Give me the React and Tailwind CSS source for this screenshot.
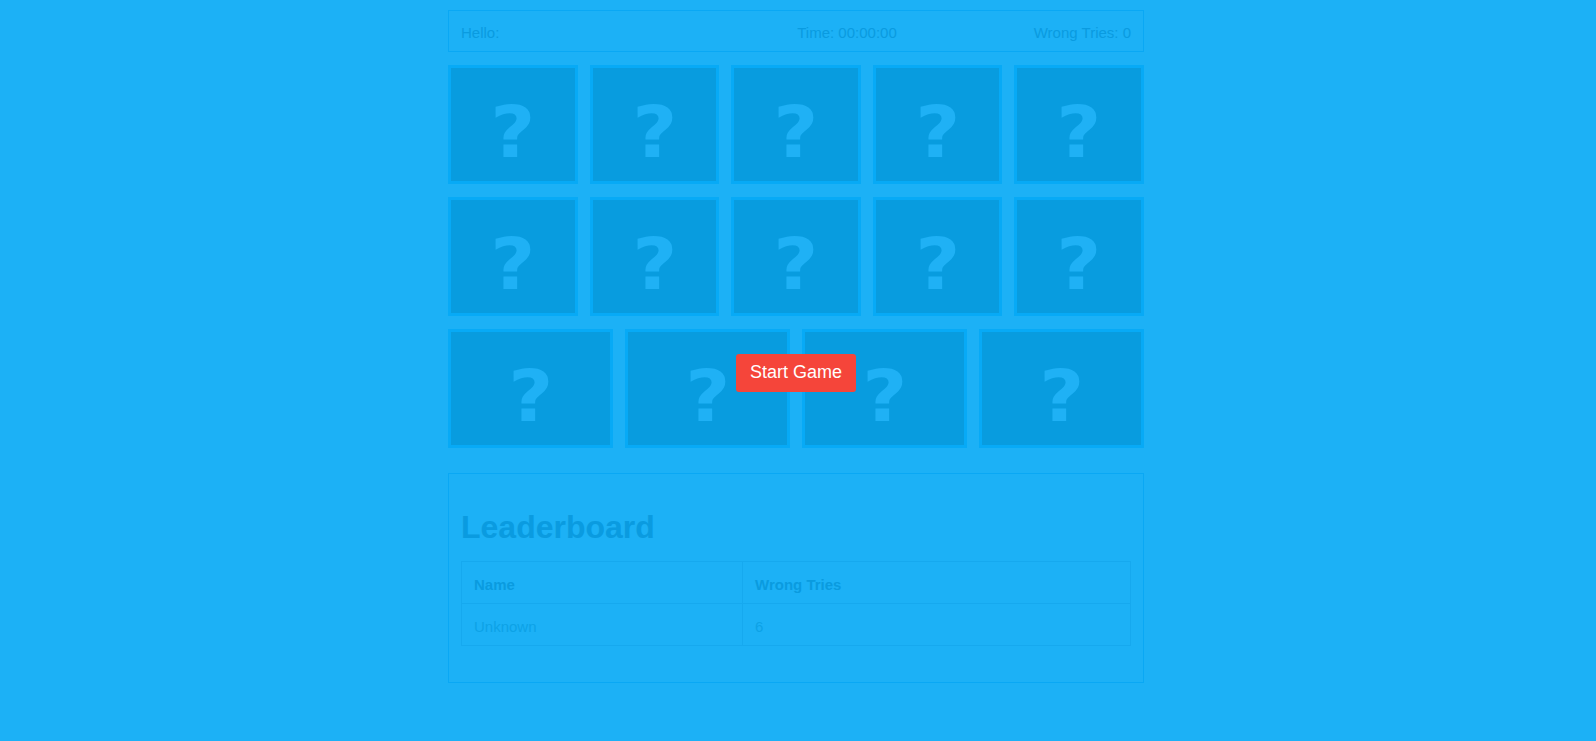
import { useState } from 'react';

const rows = [5, 5, 4];

function Card() {
    return (
        <div className="flex-1 h-[119px] flex items-center justify-center border-[3px] border-[#07aaf6] bg-[#089cdf]">
            <span className="inline-block scale-x-[1.08] font-['DejaVu_Sans',sans-serif] font-bold text-[72px] leading-none text-[#1fb1f5] mt-[14px]">
                ?
            </span>
        </div>
    );
}

export default function App() {
    const [wrongTries] = useState(0);
    const leaders = [{ name: 'Unknown', tries: 6 }];

    return (
        <div className="relative min-h-[741px] bg-[#1cb1f6] font-['Liberation_Sans',Arial,sans-serif]">
            <div className="w-[696px] mx-auto pt-[10px] -translate-x-[2px]">
                {/* Status bar */}
                <div className="h-[42px] flex items-center px-3 pt-[4px] border border-[#0aa8f4] text-[15px] text-[#0a9be0]">
                    <span className="flex-1">Hello:</span>
                    <span>Time: 00:00:00</span>
                    <span className="ml-[137px]">Wrong Tries: {wrongTries}</span>
                </div>

                {/* Board */}
                <div className="mt-[13px] flex flex-col gap-[13px]">
                    {rows.map((count, r) => (
                        <div key={r} className="flex gap-3">
                            {Array.from({ length: count }).map((_, i) => (
                                <Card key={i} />
                            ))}
                        </div>
                    ))}
                </div>

                {/* Leaderboard */}
                <div className="mt-[25px] border border-[#0aa8f4] p-3">
                    <h2 className="mt-[23px] mb-[15px] text-[32px] leading-[37px] font-bold text-[#0a9be0]">
                        Leaderboard
                    </h2>
                    <table className="w-full mb-6 border-collapse text-[15px]">
                        <thead>
                            <tr className="h-[42px]">
                                <th className="w-[281px] px-3 pt-[6px] text-left font-bold text-[#0a9bdf] border border-[#16a9ef]">Name</th>
                                <th className="px-3 pt-[6px] text-left font-bold text-[#0a9bdf] border border-[#16a9ef]">Wrong Tries</th>
                            </tr>
                        </thead>
                        <tbody>
                            {leaders.map((l) => (
                                <tr key={l.name} className="h-[42px]">
                                    <td className="px-3 pt-[6px] text-[#0da2e6] border border-[#16a9ef]">{l.name}</td>
                                    <td className="px-3 pt-[6px] text-[#0da2e6] border border-[#16a9ef]">{l.tries}</td>
                                </tr>
                            ))}
                        </tbody>
                    </table>
                </div>
            </div>

            {/* Start overlay */}
            <div className="absolute inset-0 h-[741px] flex items-center justify-center pr-[4px] pt-[4px]">
                <button className="w-[120px] h-[38px] rounded-[3px] bg-[#f5453a] text-white text-[18px] font-['Liberation_Sans',Arial,sans-serif]">
                    Start Game
                </button>
            </div>
        </div>
    );
}
